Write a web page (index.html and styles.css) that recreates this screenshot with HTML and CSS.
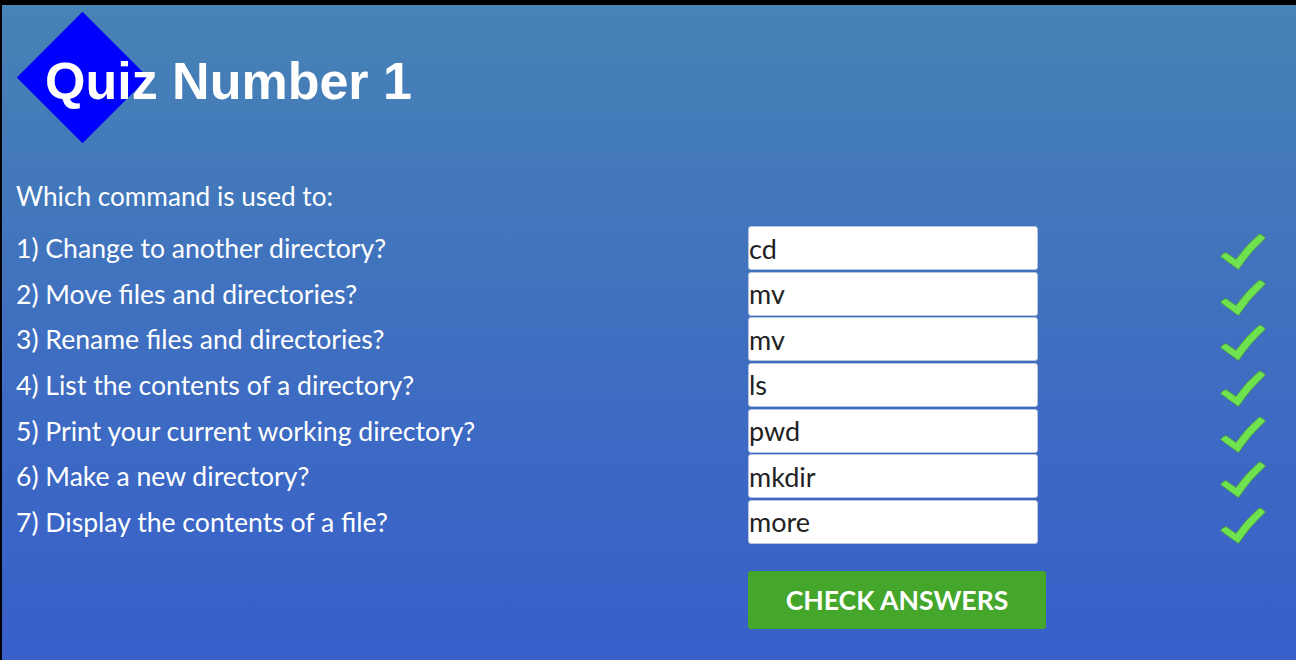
FILE: index.html
```html
<!DOCTYPE html>
<html lang="en">
<head>
<meta charset="utf-8">
<title>Quiz Number 1</title>
<link rel="stylesheet" href="styles.css">
</head>
<body>
<div class="page">
  <header class="header">
    <div class="diamond"></div>
    <h1 class="title">Quiz Number 1</h1>
  </header>
  <p class="intro">Which command is used to:</p>
  <div class="quiz">
    <div class="row"><label class="label">1) Change to another directory?</label><input class="answer" type="text" value="cd"><span class="check"><svg viewBox="0 0 46 37" width="46" height="37"><path d="M0.5 23.5 Q3 20 6 19.5 L16 26.5 Q26 12 39.5 1 Q43 2 45.5 5 Q30 19 18.5 36.5 Q16 35 0.5 23.5 Z"/></svg></span></div>
    <div class="row"><label class="label">2) Move files and directories?</label><input class="answer" type="text" value="mv"><span class="check"><svg viewBox="0 0 46 37" width="46" height="37"><path d="M0.5 23.5 Q3 20 6 19.5 L16 26.5 Q26 12 39.5 1 Q43 2 45.5 5 Q30 19 18.5 36.5 Q16 35 0.5 23.5 Z"/></svg></span></div>
    <div class="row"><label class="label">3) Rename files and directories?</label><input class="answer" type="text" value="mv"><span class="check"><svg viewBox="0 0 46 37" width="46" height="37"><path d="M0.5 23.5 Q3 20 6 19.5 L16 26.5 Q26 12 39.5 1 Q43 2 45.5 5 Q30 19 18.5 36.5 Q16 35 0.5 23.5 Z"/></svg></span></div>
    <div class="row"><label class="label">4) List the contents of a directory?</label><input class="answer" type="text" value="ls"><span class="check"><svg viewBox="0 0 46 37" width="46" height="37"><path d="M0.5 23.5 Q3 20 6 19.5 L16 26.5 Q26 12 39.5 1 Q43 2 45.5 5 Q30 19 18.5 36.5 Q16 35 0.5 23.5 Z"/></svg></span></div>
    <div class="row"><label class="label">5) Print your current working directory?</label><input class="answer" type="text" value="pwd"><span class="check"><svg viewBox="0 0 46 37" width="46" height="37"><path d="M0.5 23.5 Q3 20 6 19.5 L16 26.5 Q26 12 39.5 1 Q43 2 45.5 5 Q30 19 18.5 36.5 Q16 35 0.5 23.5 Z"/></svg></span></div>
    <div class="row"><label class="label">6) Make a new directory?</label><input class="answer" type="text" value="mkdir"><span class="check"><svg viewBox="0 0 46 37" width="46" height="37"><path d="M0.5 23.5 Q3 20 6 19.5 L16 26.5 Q26 12 39.5 1 Q43 2 45.5 5 Q30 19 18.5 36.5 Q16 35 0.5 23.5 Z"/></svg></span></div>
    <div class="row"><label class="label">7) Display the contents of a file?</label><input class="answer" type="text" value="more"><span class="check"><svg viewBox="0 0 46 37" width="46" height="37"><path d="M0.5 23.5 Q3 20 6 19.5 L16 26.5 Q26 12 39.5 1 Q43 2 45.5 5 Q30 19 18.5 36.5 Q16 35 0.5 23.5 Z"/></svg></span></div>
  </div>
  <div class="actions">
    <button class="btn" type="button">CHECK ANSWERS</button>
  </div>
</div>
</body>
</html>
```
FILE: styles.css
```css
html, body {
  margin: 0;
  padding: 0;
  background: #000;
}
body {
  width: 1296px;
  height: 660px;
  overflow: hidden;
}
.page {
  box-sizing: border-box;
  width: 1294px;
  height: 655px;
  margin: 5px 0 0 2px;
  padding: 0 14px;
  background: linear-gradient(to bottom, #4783b5 0%, #3f6fc0 50%, #385fca 100%);
  font-family: Lato, "Open Sans", sans-serif;
  color: #fff;
}
.header {
  position: relative;
  height: 170px;
}
.diamond {
  position: absolute;
  left: 19.5px;
  top: 25.5px;
  width: 93px;
  height: 93px;
  background: #0000ff;
  transform: rotate(45deg);
}
.title {
  position: relative;
  margin: 0;
  padding: 46px 0 0 29px;
  font-family: "Liberation Sans", Arial, sans-serif;
  font-weight: bold;
  font-size: 52px;
  line-height: 60px;
  color: #fff;
}
.intro {
  margin: 0;
  padding-top: 6px;
  font-size: 26.2px;
  line-height: 30px;
  height: 45px;
}
.quiz {
  display: flex;
  flex-direction: column;
}
.row {
  display: grid;
  grid-template-columns: 732px 290px 1fr;
  align-items: center;
  height: 45.67px;
}
.label {
  font-size: 26.6px;
  line-height: 44px;
  height: 44px;
  align-self: start;
  white-space: nowrap;
}
.answer {
  box-sizing: border-box;
  align-self: start;
  width: 290px;
  height: 44px;
  margin: 0;
  padding: 0;
  border: 1px solid #b8c4dc;
  border-radius: 3px;
  background: #fff;
  font-family: Lato, "Open Sans", sans-serif;
  font-size: 27px;
  color: #222;
  outline: none;
}
.check {
  align-self: start;
  padding: 7px 0 0 182px;
  line-height: 0;
}
.check svg {
  display: block;
}
.check path {
  fill: #6ee24f;
  stroke: #4f9a3a;
  stroke-width: 0.8;
  stroke-linejoin: round;
}
.actions {
  padding: 25px 0 0 732px;
}
.btn {
  width: 298px;
  height: 58px;
  margin: 0;
  padding: 0;
  border: none;
  border-radius: 3px;
  background: #44a62b;
  color: #fff;
  font-family: Lato, "Open Sans", sans-serif;
  font-weight: bold;
  font-size: 26.6px;
}
```
